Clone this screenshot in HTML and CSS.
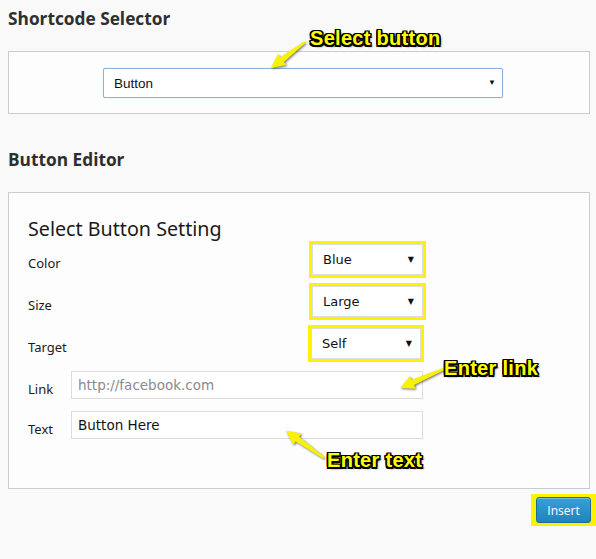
FILE: index.html
```html
<!DOCTYPE html>
<html>
<head>
<meta charset="utf-8">
<link rel="stylesheet" href="styles.css">
</head>
<body>
<div class="page">
  <h2 class="heading">Shortcode Selector</h2>
  <div class="box box-selector">
    <div class="select select-wide"><span>Button</span><span class="caret">▼</span></div>
  </div>

  <h2 class="heading heading-editor">Button Editor</h2>
  <div class="box box-editor">
    <h3 class="title">Select Button Setting</h3>
    <div class="row row-select row-first">
      <span class="label">Color</span>
      <div class="hl"><div class="select select-small"><span>Blue</span><span class="caret">▼</span></div></div>
    </div>
    <div class="row row-select">
      <span class="label">Size</span>
      <div class="hl"><div class="select select-small"><span>Large</span><span class="caret">▼</span></div></div>
    </div>
    <div class="row row-select">
      <span class="label">Target</span>
      <div class="hl hl-self"><div class="select select-small"><span>Self</span><span class="caret">▼</span></div></div>
    </div>
    <div class="row row-input row-link">
      <span class="label label-input">Link</span>
      <div class="input placeholder">http://facebook.com</div>
    </div>
    <div class="row row-input row-text">
      <span class="label label-input">Text</span>
      <div class="input">Button Here</div>
    </div>
  </div>

  <div class="actions">
    <div class="hl-btn"><button class="insert">Insert</button></div>
  </div>

  <svg class="arrows" width="596" height="559" viewBox="0 0 596 559">
    <polygon points="304.4,41.2 280.3,57.2 277.9,54.1 271,68 286.3,65.1 283.9,62.0 305.6,42.8"/>
    <polygon points="445.6,367.1 411.6,379.7 410.0,376.0 400,388 415.6,388.8 414.0,385.1 446.4,368.9"/>
    <polygon points="324.6,457.2 299.1,436.7 301.5,433.4 286,431 293.3,444.8 295.7,441.5 323.4,458.8"/>
  </svg>
  <span class="note note-select">Select button</span>
  <span class="note note-link">Enter link</span>
  <span class="note note-text">Enter text</span>
</div>
</body>
</html>
```

FILE: styles.css
```css
html, body {
  margin: 0;
  padding: 0;
  background: #f9f9f9;
}
.page {
  position: relative;
  width: 596px;
  height: 559px;
  padding: 6px 7px 0 8px;
  box-sizing: border-box;
  font-family: "Open Sans", "Noto Sans", sans-serif;
  color: #222;
}
.heading {
  margin: 0;
  font-size: 17.3px;
  line-height: 25px;
  font-weight: 700;
  color: #2e2e2e;
}
.heading-editor {
  margin-top: 33px;
}
.box {
  border: 1px solid #cccccc;
  background: #fdfdfd;
  width: 582px;
  box-sizing: border-box;
}
.box-selector {
  margin-top: 20px;
  height: 63px;
  padding: 16px 0 0 94px;
}
.select {
  display: flex;
  align-items: center;
  justify-content: space-between;
  background: #fff;
  box-sizing: border-box;
  font-family: "Liberation Sans", Arial, sans-serif;
  color: #111;
}
.select-wide {
  width: 400px;
  height: 30px;
  border: 1px solid #8eaee0;
  border-radius: 2px;
  box-shadow: 0 0 1px #a8c2ea;
  padding: 0 6px 0 10px;
  font-size: 13.5px;
}
.caret {
  font-size: 8px;
  color: #111;
  line-height: 1;
}
.box-editor {
  margin-top: 20px;
  height: 297px;
  padding: 24px 0 0 19px;
}
.title {
  margin: 0;
  font-family: "Noto Sans", "Open Sans", sans-serif;
  font-weight: 400;
  font-size: 19.7px;
  line-height: 24px;
  color: #1a1a1a;
}
.row {
  display: flex;
  align-items: center;
}
.row-select {
  height: 37px;
  margin-top: 5px;
}
.row-first {
  margin-top: 0;
}
.label {
  width: 43px;
  font-size: 13px;
  color: #1a1a1a;
  font-family: "Noto Sans", "Open Sans", sans-serif;
  flex: none;
}
.row-select .label {
  width: 281px;
  padding-top: 7px;
}
.hl {
  border: 3px solid #fff200;
  width: 117px;
  height: 37px;
  box-sizing: border-box;
}
.hl-self {
  margin-left: -1px;
  width: 116px;
}
.select-small {
  width: 100%;
  height: 100%;
  border: 1px solid #dddddd;
  padding: 0 8px 0 10px;
  font-family: "DejaVu Sans", Verdana, sans-serif;
  font-size: 13px;
}
.row-input {
  height: 28px;
}
.row-link {
  margin-top: 9px;
}
.row-text {
  margin-top: 12px;
}
.label-input {
  padding-top: 8px;
}
.input {
  width: 352px;
  height: 28px;
  box-sizing: border-box;
  border: 1px solid #dddddd;
  background: #fff;
  padding: 0 6px;
  display: flex;
  align-items: center;
  font-family: "DejaVu Sans", Verdana, sans-serif;
  font-size: 13.5px;
  color: #111;
}
.placeholder {
  color: #8a8a8a;
}
.actions {
  display: flex;
  justify-content: flex-end;
  margin-top: 5px;
  margin-right: -7px;
}
.hl-btn {
  border: 3px solid #fff200;
  padding: 0 2px;
  background: #fff200;
  display: flex;
}
.insert {
  width: 55px;
  height: 26px;
  border: 1px solid #1c6a97;
  border-radius: 3px;
  background: linear-gradient(#36a0d6, #2083bd);
  color: #fff;
  font-family: "Open Sans", sans-serif;
  font-size: 12px;
  padding: 0;
  box-shadow: inset 0 1px 0 #6cc0ea;
}
.arrows {
  position: absolute;
  left: 0;
  top: 0;
  pointer-events: none;
  fill: #f7f200;
  filter: drop-shadow(1px 1px 1px rgba(0,0,0,0.55));
}
.note {
  position: absolute;
  font-family: "Liberation Sans", Arial, sans-serif;
  font-weight: 700;
  font-size: 20px;
  line-height: 22px;
  letter-spacing: 0.3px;
  color: #ffff00;
  white-space: nowrap;
  text-shadow:
    -1.5px -1.5px 0 #000, 1.5px -1.5px 0 #000, -1.5px 1.5px 0 #000, 1.5px 1.5px 0 #000,
    0 -1.5px 0 #000, 0 1.5px 0 #000, -1.5px 0 0 #000, 1.5px 0 0 #000,
    2px 2px 2px rgba(0,0,0,0.6);
}
.note-select {
  left: 310px;
  top: 27px;
}
.note-link {
  left: 444px;
  top: 357px;
}
.note-text {
  left: 327px;
  top: 449px;
}
```
